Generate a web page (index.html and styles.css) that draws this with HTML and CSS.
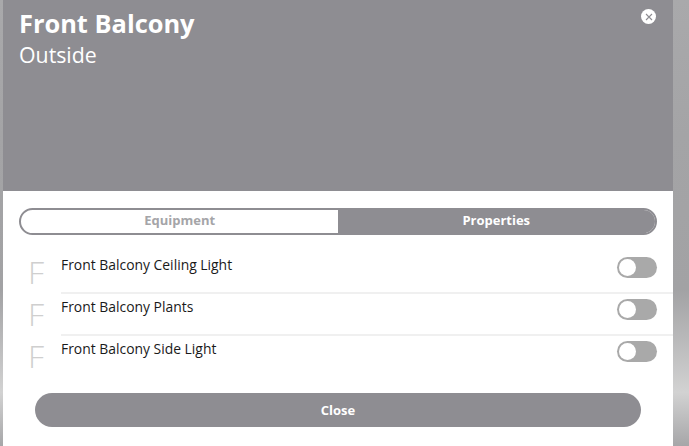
FILE: index.html
```html
<!DOCTYPE html>
<html>
<head>
  <meta charset="UTF-8">
  <title>Front Balcony</title>
  <link rel="stylesheet" href="styles.css">
</head>
<body>
  <div class="panel">
    <header class="head">
      <div>
        <h1>Front Balcony</h1>
        <p>Outside</p>
      </div>
      <button class="x" type="button" aria-label="Dismiss">
        <svg width="8" height="8" viewBox="0 0 8 8"><path d="M1 1l6 6M7 1L1 7" stroke="#8e8d92" stroke-width="1.1" fill="none"/></svg>
      </button>
    </header>
    <div class="content">
      <div class="tabs">
        <div class="tab">Equipment</div>
        <div class="tab active">Properties</div>
      </div>
      <div class="list">
        <div class="row">
          <span class="letter">F</span>
          <div class="row-main"><span class="name">Front Balcony Ceiling Light</span><span class="toggle"></span></div>
        </div>
        <div class="row">
          <span class="letter">F</span>
          <div class="row-main"><span class="name">Front Balcony Plants</span><span class="toggle"></span></div>
        </div>
        <div class="row">
          <span class="letter">F</span>
          <div class="row-main"><span class="name">Front Balcony Side Light</span><span class="toggle"></span></div>
        </div>
      </div>
      <button class="close" type="button">Close</button>
    </div>
  </div>
</body>
</html>
```
FILE: styles.css
```css
html, body {
  height: 100%;
}
body {
  margin: 0;
  padding: 0 16px 0 3px;
  height: 446px;
  box-sizing: border-box;
  overflow: hidden;
  font-family: 'Open Sans', sans-serif;
  background: linear-gradient(180deg, #a9a9ab 0%, #a4a4a6 30%, #a2a2a4 65%, #d2d2d2 88%, #a6a6a8 100%);
}
.panel {
  height: 446px;
  background: #fff;
}
.head {
  height: 191px;
  box-sizing: border-box;
  background: #8e8d92;
  color: #fff;
  padding: 5px 17px 0 16px;
  display: flex;
  justify-content: space-between;
  align-items: flex-start;
}
.head h1 {
  margin: 0;
  font-size: 25.4px;
  line-height: 36px;
  font-weight: 700;
}
.head p {
  margin: 0;
  font-size: 21.3px;
  line-height: 28px;
}
.x {
  width: 15px;
  height: 15px;
  margin-top: 4px;
  padding: 0;
  border: none;
  border-radius: 50%;
  background: #fff;
  display: flex;
  align-items: center;
  justify-content: center;
}
.content {
  padding: 17px 16px 0 16px;
}
.tabs {
  display: flex;
  height: 27px;
  box-sizing: border-box;
  border: 2px solid #8e8d92;
  border-radius: 14px;
  overflow: hidden;
  font-size: 13px;
  font-weight: 700;
  line-height: 21px;
}
.tab {
  flex: 1;
  text-align: center;
  color: #a5a5a8;
}
.tab.active {
  background: #8e8d92;
  color: #fff;
  margin-left: -1px;
}
.list {
  margin-top: 16px;
}
.row {
  display: flex;
  height: 42px;
}
.letter {
  width: 42px;
  padding: 1px 0 0 9px;
  box-sizing: border-box;
  font-size: 32px;
  line-height: 40px;
  font-weight: 300;
  color: #cfcfcf;
}
.row-main {
  flex: 1;
  margin-right: -16px;
  padding: 5px 16px 0 0;
  height: 43px;
  box-sizing: border-box;
  display: flex;
  justify-content: space-between;
  align-items: flex-start;
  border-bottom: 2px solid #f0f0f0;
}
.row:last-child .row-main {
  border-bottom: none;
}
.name {
  font-size: 13.9px;
  line-height: 18px;
  color: #1a1a1a;
}
.toggle {
  width: 40px;
  height: 21px;
  margin-top: 1px;
  border-radius: 11px;
  background: #a9a9a9;
  position: relative;
}
.toggle::before {
  content: "";
  position: absolute;
  left: 2px;
  top: 2px;
  width: 17px;
  height: 17px;
  border-radius: 50%;
  background: #fff;
}
.close {
  display: block;
  width: 606px;
  height: 34px;
  margin: 16px 0 0 16px;
  border: none;
  border-radius: 17px;
  background: #8e8d92;
  color: #fff;
  font-family: inherit;
  font-size: 13px;
  font-weight: 700;
}
```
